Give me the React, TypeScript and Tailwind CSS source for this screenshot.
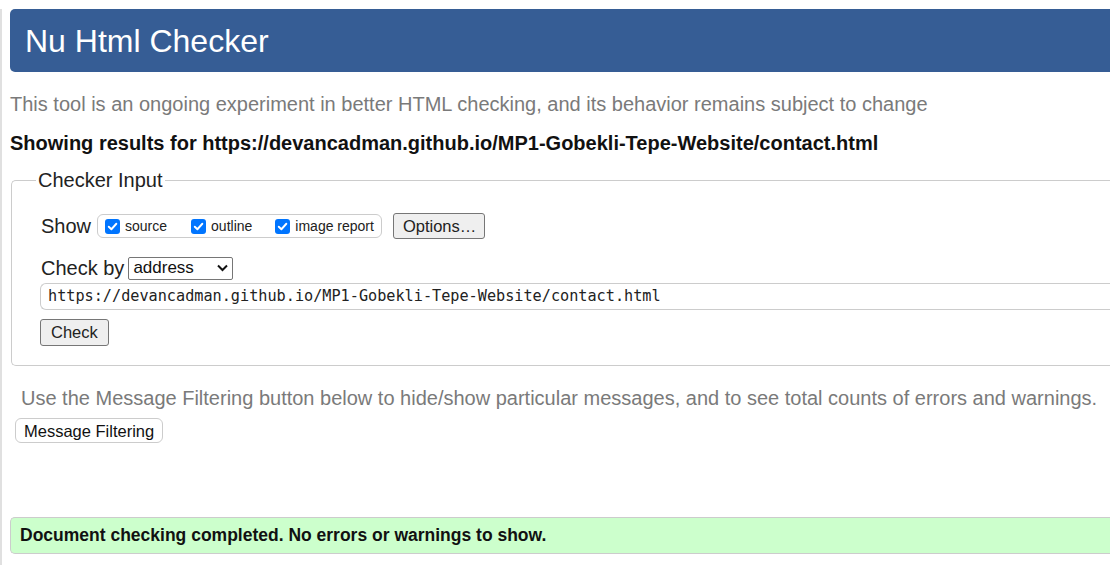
import React from "react";

const Check = () => (
  <span className="inline-flex h-[15px] w-[15px] items-center justify-center rounded-[3px] bg-[#0075ff]">
    <svg width="11" height="11" viewBox="0 0 10 10">
      <path d="M1.6 5.2 L4 7.5 L8.5 2.5" fill="none" stroke="#fff" strokeWidth="1.7" strokeLinecap="round" strokeLinejoin="round" />
    </svg>
  </span>
);

export default function App() {
  return (
    <div className="h-[565px] w-[1110px] overflow-hidden bg-white font-['Liberation_Sans',Arial,sans-serif]">
      <div className="h-[564px] border-b-2 border-l-2 border-[#e0e0e0] pl-[8px]">
        <div className="mt-[9px] flex h-[63px] items-center rounded-l-[5px] bg-[#365d95] pl-[15px] text-[32px] text-white">
          Nu Html Checker
        </div>
        <p className="mt-[20px] text-[20px] leading-[24px] text-[#7a7a7a]">
          This tool is an ongoing experiment in better HTML checking, and its behavior remains subject to change
        </p>
        <p className="mt-[15px] text-[20px] font-bold leading-[24px] text-[#111]">
          Showing results for https://devancadman.github.io/MP1-Gobekli-Tepe-Website/contact.html
        </p>
        <fieldset className="mt-[14px] ml-[1px] rounded-l-[5px] border border-r-0 border-[#ccc] pb-[19px] pl-[29px]">
          <legend className="-ml-[5px] px-[2px] text-[20px] leading-[22px] text-[#222]">Checker Input</legend>
          <div className="mt-[22px] flex h-[26px] items-center">
            <span className="text-[20px] text-[#222]">Show</span>
            <div className="ml-[6px] flex h-[24px] items-center rounded-[6px] border border-[#ccc] pl-[7px] pr-[7px] text-[14px] text-[#222]">
              <Check />
              <span className="ml-[5px]">source</span>
              <span className="ml-[24px] flex"><Check /></span>
              <span className="ml-[5px]">outline</span>
              <span className="ml-[23px] flex"><Check /></span>
              <span className="ml-[5px]">image report</span>
            </div>
            <button className="ml-[11px] h-[26px] rounded-[3px] border border-[#767676] bg-[#efefef] pl-[9px] pr-[8px] text-[16.5px] text-[#222]">
              Options…
            </button>
          </div>
          <div className="mt-[17px] flex h-[24px] items-center">
            <span className="text-[20px] text-[#222]">Check by</span>
            <div className="ml-[4px] flex h-[23px] w-[105px] items-center justify-between rounded-[2px] border border-[#767676] pl-[4px] pr-[3px] text-[17px] text-[#111]">
              <span>address</span>
              <svg width="13" height="8" viewBox="0 0 13 8">
                <path d="M2 1.5 L6.5 6 L11 1.5" fill="none" stroke="#111" strokeWidth="2" />
              </svg>
            </div>
          </div>
          <div className="mt-[3px] -ml-[1px] flex h-[27px] items-center rounded-l-[6px] border border-r-0 border-[#ccc] pl-[7px] font-['DejaVu_Sans_Mono',monospace] text-[15.2px] text-[#222]">
            https://devancadman.github.io/MP1-Gobekli-Tepe-Website/contact.html
          </div>
          <button className="mt-[9px] -ml-[1px] h-[27px] rounded-[3px] border border-[#767676] bg-[#efefef] px-[10px] text-[16.5px] text-[#222]">
            Check
          </button>
        </fieldset>
        <p className="mt-[20px] pl-[11px] text-[20px] leading-[24px] text-[#7a7a7a]">
          Use the Message Filtering button below to hide/show particular messages, and to see total counts of errors and warnings.
        </p>
        <button className="mt-[8px] ml-[5px] h-[25px] rounded-[6px] border border-[#ccc] bg-white px-[8px] text-[16.5px] text-[#111]">
          Message Filtering
        </button>
        <div className="mt-[73px] flex h-[37px] items-center rounded-l-[5px] border border-r-0 border-[#ccc] bg-[#ccffcc] pl-[9px] text-[17.5px] font-bold text-[#111]">
          Document checking completed. No errors or warnings to show.
        </div>
      </div>
    </div>
  );
}
